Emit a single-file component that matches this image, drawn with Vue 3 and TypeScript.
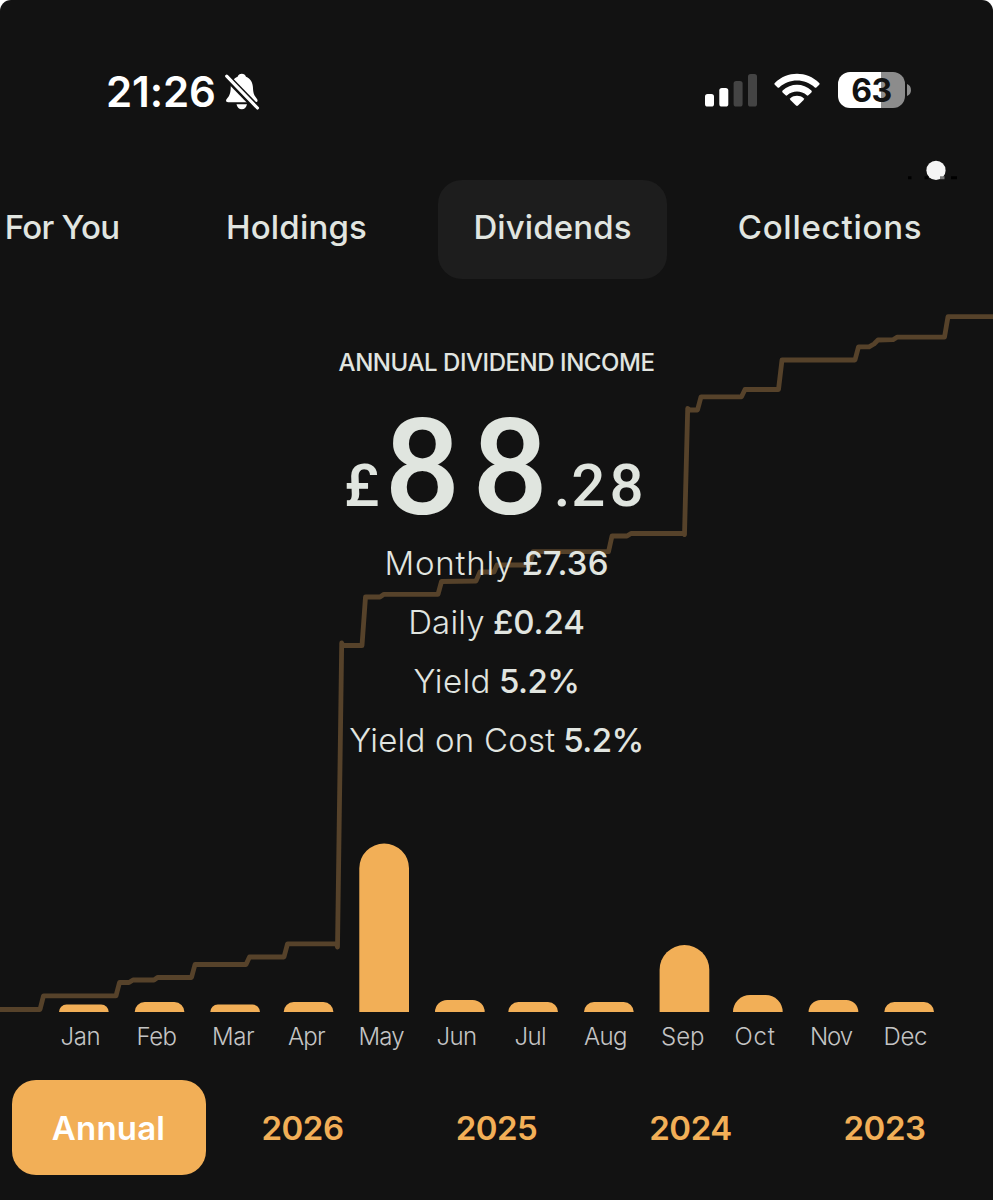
<script setup lang="ts">
interface Tab { label: string; width: number; spacing: number; active?: boolean }
interface Stat { label: string; value: string; labelSpacing: number; valueSpacing: number }
interface Month { name: string; x: number; height: number; labelX: number; labelWidth: number }

const tabs: Tab[] = [
  { label: 'For You', width: 186, spacing: -0.7 },
  { label: 'Holdings', width: 212, spacing: 0.2 },
  { label: 'Dividends', width: 229, spacing: 0.1, active: true },
  { label: 'Collections', width: 255, spacing: 0.75 },
]

const stats: Stat[] = [
  { label: 'Monthly', value: '£7.36', labelSpacing: 0.8, valueSpacing: 0.1 },
  { label: 'Daily', value: '£0.24', labelSpacing: 0.2, valueSpacing: -0.1 },
  { label: 'Yield', value: '5.2%', labelSpacing: 0.4, valueSpacing: -0.5 },
  { label: 'Yield on Cost', value: '5.2%', labelSpacing: 0.2, valueSpacing: -0.5 },
]

const months: Month[] = [
  { name: 'Jan', x: 59, height: 7.5, labelX: 60.5, labelWidth: 40 },
  { name: 'Feb', x: 134.7, height: 10, labelX: 136.5, labelWidth: 40.5 },
  { name: 'Mar', x: 210.3, height: 7.5, labelX: 212, labelWidth: 42.5 },
  { name: 'Apr', x: 283.7, height: 10, labelX: 288, labelWidth: 37.5 },
  { name: 'May', x: 359.3, height: 168.5, labelX: 358.5, labelWidth: 46 },
  { name: 'Jun', x: 435, height: 12, labelX: 436.5, labelWidth: 40.5 },
  { name: 'Jul', x: 508.3, height: 10, labelX: 514.5, labelWidth: 32 },
  { name: 'Aug', x: 584, height: 10, labelX: 584, labelWidth: 43.5 },
  { name: 'Sep', x: 659.6, height: 67, labelX: 661, labelWidth: 43.5 },
  { name: 'Oct', x: 733, height: 17, labelX: 734.5, labelWidth: 40.5 },
  { name: 'Nov', x: 808.6, height: 12, labelX: 810, labelWidth: 43 },
  { name: 'Dec', x: 884.3, height: 10, labelX: 883.5, labelWidth: 44 },
]

const years: string[] = ['Annual', '2026', '2025', '2024', '2023']

const barWidth = 49.7
const baseY = 182

function barPath(m: Month): string {
  const r = Math.min(m.height, barWidth / 2)
  const top = baseY - m.height
  const right = m.x + barWidth
  return `M${m.x} ${baseY}V${top + r}A${r} ${r} 0 0 1 ${m.x + r} ${top}H${right - r}A${r} ${r} 0 0 1 ${right} ${top + r}V${baseY}Z`
}

const incomeLine =
  '0,1009.5 40,1009.5 43.5,995.8 116,995.8 119.5,982.5 129,982.5 133,980 154,980 157.5,977.5 191.5,977.5 195,964.5 246,964.5 249.5,957 284,957 287.5,943.8 336.5,943.8 337.5,947 341.7,643 343,645.5 362,645.5 365.5,597 380,597 384,594.3 438,594.3 441.5,581.5 476,581 480,572 494,572 497,565 530,565 533,551.7 608.5,551.7 612,536 627,536 631,533.5 683.5,533.5 684.5,534.5 687.7,408.5 690,410 697.5,410 701,396.8 741.5,396.8 745,389.5 778.5,389.5 782,360 855,360 858.5,346.8 869,346.8 874,344 878,340 893,339.7 897,337.2 944.5,337.2 948,316.7 993,316.7'
</script>

<template>
  <main class="screen">
    <svg class="trend" viewBox="0 0 993 1200" aria-hidden="true">
      <polyline :points="incomeLine" />
    </svg>

    <header class="status">
      <div class="clock">
        <span class="time">21:26</span>
        <svg class="bell" width="38" height="40" viewBox="0 0 38 40">
          <path d="M17.8 1.8C19.8 1.8 21.4 2.8 22 4.7C26.6 6.5 28.8 10.4 29 16C29.2 21.6 30.4 23.6 33 27C34 28.4 33.8 30.2 31.5 30.2H4.2C1.8 30.2 1.6 28.2 2.7 27C5.6 23.6 6.5 21.6 6.7 16C6.9 10.4 9.1 6.5 13.6 4.7C14.2 2.8 15.8 1.8 17.8 1.8Z" fill="#fff" />
          <path d="M12.5 32.2H23C22.4 35.3 20.4 37.2 17.8 37.2C15.1 37.2 13.1 35.3 12.5 32.2Z" fill="#fff" />
          <path d="M0 2.2L34 37" stroke="#121212" stroke-width="7" />
          <path d="M2.7 4.2L33.5 36" stroke="#fff" stroke-width="3.1" stroke-linecap="round" />
        </svg>
      </div>
      <div class="indicators">
        <svg class="signal" width="52" height="34" viewBox="0 0 52 34">
          <rect x="0" y="21" width="9" height="12.5" rx="2.6" fill="#fff" />
          <rect x="14.3" y="15" width="9" height="18.5" rx="2.6" fill="#fff" />
          <rect x="28.6" y="8" width="9" height="25.5" rx="2.6" fill="#444" />
          <rect x="43" y="1" width="9" height="32.5" rx="2.6" fill="#444" />
        </svg>
        <svg class="wifi" width="46" height="34" viewBox="0 0 46 34">
          <path d="M.8 9.9Q-.1 10.8.8 11.7L3.6 14.5Q4.4 15.2 5.2 14.5C15.2 5.3 30.8 5.3 40.8 14.5Q41.6 15.2 42.4 14.5L45.2 11.7Q46.1 10.8 45.2 9.9C32.8-2.3 13.2-2.3.8 9.9Z" fill="#fff" />
          <path d="M8.6 17.6Q7.7 18.5 8.6 19.4L11.6 22.3Q12.4 23 13.2 22.3C18.8 17.3 27.2 17.3 32.8 22.3Q33.6 23 34.4 22.3L37.4 19.4Q38.3 18.5 37.4 17.6C29.2 9.9 16.8 9.9 8.6 17.6Z" fill="#fff" />
          <path d="M16.4 25.2Q15.6 26.1 16.4 27L22 32.6Q23 33.5 24 32.6L29.6 27Q30.4 26.1 29.6 25.2C26 22 20 22 16.4 25.2Z" fill="#fff" />
        </svg>
        <div class="battery">63</div>
        <svg class="nub" width="4" height="12" viewBox="0 0 4 12"><path d="M0 0C5.3 1.5 5.3 10.5 0 12Z" fill="#8c8c8c" /></svg>
      </div>
    </header>

    <svg class="marker" width="52" height="22" viewBox="0 0 52 22" aria-hidden="true">
      <circle cx="29" cy="10.4" r="9.6" fill="#f5f5f5" />
      <path d="M1 17.8h3.5M17.5 17.8h4M44 17.8h6" stroke="#000" stroke-width="3" />
      <path d="M33 17.8h4.5" stroke="#777" stroke-width="3" />
    </svg>

    <nav class="tabs">
      <button v-for="tab in tabs" :key="tab.label" class="tab" :class="{ active: tab.active }" :style="{ width: tab.width + 'px', letterSpacing: tab.spacing + 'px' }">{{ tab.label }}</button>
    </nav>

    <section class="summary">
      <h1>ANNUAL DIVIDEND INCOME</h1>
      <div class="amount"><span class="minor pound">£</span><span class="major">8<span class="units">8</span></span><span class="minor pence"><span class="point">.</span>28</span></div>
      <p v-for="stat in stats" :key="stat.label" class="stat">
        <span :style="{ letterSpacing: stat.labelSpacing + 'px' }">{{ stat.label }}</span>
        <strong :style="{ letterSpacing: stat.valueSpacing + 'px' }">{{ stat.value }}</strong>
      </p>
    </section>

    <svg class="chart" width="993" height="230" viewBox="0 0 993 230">
      <g v-for="m in months" :key="m.name">
        <path :d="barPath(m)" />
        <text :x="m.labelX" y="215" :textLength="m.labelWidth">{{ m.name }}</text>
      </g>
    </svg>

    <nav class="years">
      <button v-for="(year, i) in years" :key="year" class="year" :class="{ active: i === 0 }">{{ year }}</button>
    </nav>
  </main>
</template>

<style>
body { margin: 0; background: #fff; }
</style>

<style scoped>
.screen { position: relative; isolation: isolate; box-sizing: border-box; width: 993px; height: 1200px; overflow: hidden; background: #121212; border-radius: 11px 11px 0 0; font-family: Inter, "Liberation Sans", sans-serif; color: #e1e5e0; }
.trend { position: absolute; inset: 0; z-index: -1; width: 993px; height: 1200px; }
.trend polyline { fill: none; stroke: #56422a; stroke-width: 4.8; stroke-linejoin: round; stroke-linecap: round; }
.status { display: flex; justify-content: space-between; box-sizing: border-box; height: 180px; padding: 72px 82px 0 106px; color: #fff; }
.clock { display: flex; height: 40px; }
.time { font-size: 42px; line-height: 40px; font-weight: 560; letter-spacing: -0.1px; width: 118px; }
.bell { flex: none; }
.indicators { display: flex; height: 36px; }
.signal { margin-top: 1px; }
.wifi { margin: 1px 18px 0 17px; }
.battery { width: 67px; height: 36px; border-radius: 12px; background: linear-gradient(90deg, #fff 42.5px, #8c8c8c 42.5px); color: #121212; font-size: 32px; line-height: 37px; font-weight: 700; text-align: center; letter-spacing: -0.4px; }
.nub { margin: 12px 0 0 2px; }
.marker { position: absolute; left: 907px; top: 160px; }
button { appearance: none; border: 0; padding: 0; margin: 0; background: none; font: inherit; color: inherit; white-space: nowrap; }
.tabs { display: flex; gap: 35.5px; height: 99px; margin-left: -31px; }
.tab { flex: none; font-size: 33px; font-weight: 460; line-height: 94px; padding-bottom: 5px; border-radius: 24px; }
.tab.active { background: #1d1d1d; }
.summary { height: 551px; text-align: center; }
h1 { margin: 0; padding-top: 69px; font-size: 24px; line-height: 30px; font-weight: 530; letter-spacing: -0.45px; }
.amount { display: flex; box-sizing: border-box; height: 156px; padding-left: 344px; font-family: Roboto, sans-serif; font-weight: 500; color: #e0e5df; }
.minor { font-size: 60px; line-height: 60px; margin-top: 78px; }
.pound { letter-spacing: 5px; }
.major { font-size: 134px; line-height: 110px; margin-top: 36px; letter-spacing: 11.5px; }
.units { letter-spacing: 5.5px; }
.pence { letter-spacing: 4px; }
.point { letter-spacing: 1px; }
.stat { display: flex; justify-content: center; gap: 8px; margin: 0; font-size: 33px; line-height: 59px; font-weight: 300; white-space: nowrap; }
.stat strong { font-weight: 540; }
.chart { display: block; }
.chart path { fill: #f2af57; }
.chart text { font-size: 24px; font-weight: 300; fill: #c4c4c4; }
.years { display: flex; margin: 20px 0 0 12px; }
.year { width: 194px; height: 95px; flex: none; padding-right: 1px; font-size: 33px; font-weight: 570; letter-spacing: -0.5px; color: #f2af57; border-radius: 24px; }
.year.active { background: #f2af57; color: #fff; letter-spacing: 0.2px; }
</style>
